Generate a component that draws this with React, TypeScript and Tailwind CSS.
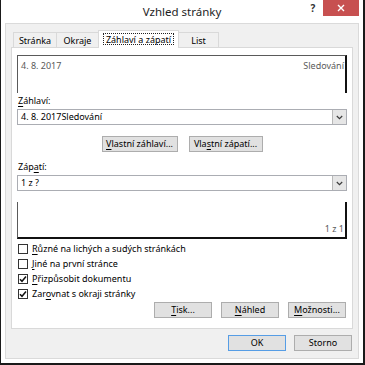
import React from "react";

function U({ children }: { children: React.ReactNode }) {
  return <span className="underline decoration-[1px] underline-offset-[1.5px]">{children}</span>;
}

function Chevron() {
  return (
    <svg width="7" height="5" viewBox="0 0 7 5">
      <path d="M0.8 1 L3.5 3.7 L6.2 1" fill="none" stroke="#3c3c3c" strokeWidth="1.2" />
    </svg>
  );
}

function Combo({ text }: { text: string }) {
  return (
    <div className="ml-[5px] w-[330px] h-[16px] border border-[#abadb3] bg-white flex items-center">
      <div className="flex-1 pl-[3px] text-[9px] leading-[12px] text-black">{text}</div>
      <div className="w-[14px] h-[14px] bg-[#e6e6e6] border-l border-[#b8b8b8] flex items-center justify-center">
        <Chevron />
      </div>
    </div>
  );
}

function Check({ checked, children }: { checked?: boolean; children: React.ReactNode }) {
  return (
    <div className="h-[15px] flex items-center pl-[6px]">
      <div className="w-[10px] h-[10px] border border-[#333333] bg-white flex items-center justify-center">
        {checked ? (
          <svg width="8" height="8" viewBox="0 0 8 8">
            <path d="M1 4.2 L3 6.3 L7 1.5" fill="none" stroke="#111" strokeWidth="1.5" />
          </svg>
        ) : null}
      </div>
      <div className="ml-[4px] text-[9px] leading-[12px] text-black">{children}</div>
    </div>
  );
}

export default function App() {
  return (
    <div className="w-[365px] h-[365px] bg-white border-l border-r-2 border-b-2 border-[#1a1a1a] flex flex-col overflow-hidden font-['Noto_Sans','Open_Sans',sans-serif] text-black">
      {/* title bar */}
      <div className="h-[23px] shrink-0 grid grid-cols-[1fr_auto_1fr]">
        <div />
        <div className="flex items-center pt-[1px] text-[11.5px] text-[#1e1e1e]">Vzhled stránky</div>
        <div className="flex justify-end items-start pr-[4px]">
          <div className="w-[20px] h-[16px] flex items-center justify-center text-[10px] font-bold text-[#333]">?</div>
          <div className="w-[36px] h-[16px] bg-[#c75050] flex items-center justify-center">
            <svg width="8" height="8" viewBox="0 0 8 8">
              <path d="M1 1 L7 7 M7 1 L1 7" stroke="#ffffff" strokeWidth="1.4" />
            </svg>
          </div>
        </div>
      </div>

      {/* client */}
      <div className="ml-[4px] mr-[4px] h-[336px] shrink-0 border border-[#dadada] bg-[#f0f0f0] flex flex-col">
        {/* tabs */}
        <div className="mt-[6px] ml-[7px] h-[17px] flex items-end relative z-10">
          <div className="w-[44px] h-[15px] border-t border-l border-r border-[#d9d9d9] bg-[#f0f0f0] flex items-center justify-center text-[9px] leading-none">Stránka</div>
          <div className="-ml-px w-[43px] h-[15px] border-t border-l border-r border-[#d9d9d9] bg-[#f0f0f0] flex items-center justify-center text-[9px] leading-none">Okraje</div>
          <div className="-ml-px w-[81px] h-[18px] -mb-px border-t border-l border-r border-[#d9d9d9] bg-white flex items-center justify-center pb-[1px] relative z-10">
            <div className="border border-dotted border-[#222] px-[2px] h-[12px] flex items-center text-[9px] leading-none">Záhlaví a zápatí</div>
          </div>
          <div className="-ml-px w-[41px] h-[15px] border-t border-l border-r border-[#d9d9d9] bg-[#f0f0f0] flex items-center justify-center text-[9px] leading-none">List</div>
        </div>

        {/* panel */}
        <div className="ml-[5px] w-[342px] h-[282px] border border-[#d9d9d9] bg-white flex flex-col">
          {/* header preview */}
          <div className="mt-[7px] ml-[5px] w-[330px] h-[38px] border-t border-l border-[#5a5a5a] border-r-2 border-r-[#111] flex justify-between pl-[3px] pr-[1px] pt-[4px] text-[9px] leading-[12px] text-[#5a5a5a]">
            <span>4. 8. 2017</span>
            <span>Sledování</span>
          </div>
          <div className="h-[16px] ml-[6px] flex items-center text-[9px] leading-[12px]">
            <span><U>Z</U>áhlaví:</span>
          </div>
          <Combo text="4. 8. 2017Sledování" />
          <div className="mt-[11px] h-[16px] flex justify-center gap-[11px] text-[9px] leading-[12px]">
            <div className="w-[76px] h-[16px] border border-[#adadad] bg-[#e1e1e1] flex items-center justify-center"><span><U>V</U>lastní záhlaví...</span></div>
            <div className="w-[74px] h-[16px] border border-[#adadad] bg-[#e1e1e1] flex items-center justify-center"><span>Vla<U>s</U>tní zápatí...</span></div>
          </div>
          <div className="mt-[7px] h-[16px] ml-[6px] flex items-center text-[9px] leading-[12px]">
            <span>Záp<U>a</U>tí:</span>
          </div>
          <Combo text="1 z ?" />
          {/* footer preview */}
          <div className="mt-[11px] ml-[5px] w-[330px] h-[37px] border-l border-l-[#5a5a5a] border-r-2 border-b-2 border-r-[#111] border-b-[#111] flex items-end justify-end pr-[1px] pb-[2px] text-[9px] leading-[12px] text-[#5a5a5a]">
            <span>1 z 1</span>
          </div>
          <div className="mt-[2px] flex flex-col">
            <Check><U>R</U>ůzné na lichých a sudých stránkách</Check>
            <Check><U>J</U>iné na první stránce</Check>
            <Check checked><U>P</U>řizpůsobit dokumentu</Check>
            <Check checked>Zar<U>o</U>vnat s okraji stránky</Check>
          </div>
          <div className="mt-[1px] h-[16px] flex justify-end pr-[6px] gap-[9px] text-[9px] leading-[12px]">
            <div className="w-[58px] h-[16px] border border-[#adadad] bg-[#e1e1e1] flex items-center justify-center"><span><U>T</U>isk...</span></div>
            <div className="w-[58px] h-[16px] border border-[#adadad] bg-[#e1e1e1] flex items-center justify-center"><span><U>N</U>áhled</span></div>
            <div className="w-[58px] h-[16px] border border-[#adadad] bg-[#e1e1e1] flex items-center justify-center"><span><U>M</U>ožnosti...</span></div>
          </div>
        </div>

        {/* OK / Storno */}
        <div className="mt-[6px] h-[16px] flex justify-end pr-[6px] gap-[8px] text-[9px] leading-[12px]">
          <div className="w-[58px] h-[16px] border border-[#569de5] bg-[#e1e1e1] flex items-center justify-center">OK</div>
          <div className="w-[58px] h-[16px] border border-[#adadad] bg-[#e1e1e1] flex items-center justify-center">Storno</div>
        </div>
      </div>
    </div>
  );
}
